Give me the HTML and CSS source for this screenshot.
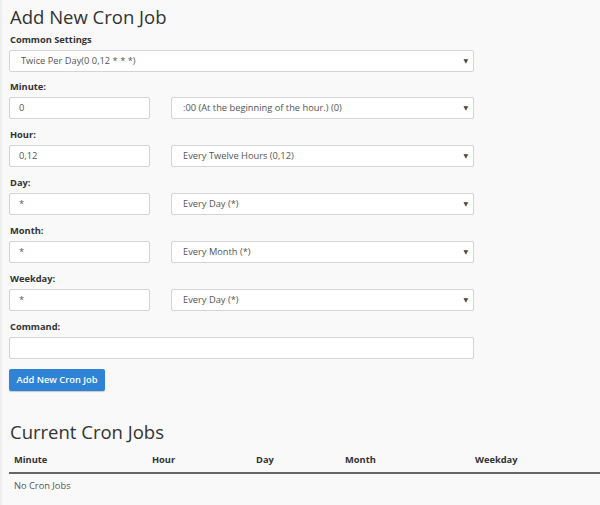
FILE: index.html
```html
<!DOCTYPE html>
<html>
<head>
<meta charset="utf-8">
<link rel="stylesheet" href="styles.css">
</head>
<body>
<div class="page">
  <h1 class="title">Add New Cron Job</h1>
  <form class="form">
    <div class="field first">
      <label class="label">Common Settings</label>
      <div class="select wide"><span class="sel-text">Twice Per Day(0 0,12 * * *)</span><span class="caret">&#9660;</span></div>
    </div>
    <div class="field">
      <label class="label">Minute:</label>
      <div class="pair">
        <div class="input">0</div>
        <div class="select"><span class="sel-text">:00 (At the beginning of the hour.) (0)</span><span class="caret">&#9660;</span></div>
      </div>
    </div>
    <div class="field">
      <label class="label">Hour:</label>
      <div class="pair">
        <div class="input">0,12</div>
        <div class="select"><span class="sel-text">Every Twelve Hours (0,12)</span><span class="caret">&#9660;</span></div>
      </div>
    </div>
    <div class="field">
      <label class="label">Day:</label>
      <div class="pair">
        <div class="input">*</div>
        <div class="select"><span class="sel-text">Every Day (*)</span><span class="caret">&#9660;</span></div>
      </div>
    </div>
    <div class="field">
      <label class="label">Month:</label>
      <div class="pair">
        <div class="input">*</div>
        <div class="select"><span class="sel-text">Every Month (*)</span><span class="caret">&#9660;</span></div>
      </div>
    </div>
    <div class="field">
      <label class="label">Weekday:</label>
      <div class="pair">
        <div class="input">*</div>
        <div class="select"><span class="sel-text">Every Day (*)</span><span class="caret">&#9660;</span></div>
      </div>
    </div>
    <div class="field">
      <label class="label">Command:</label>
      <div class="input wide"></div>
    </div>
    <div class="actions">
      <span class="btn">Add New Cron Job</span>
    </div>
  </form>

  <h2 class="title title2">Current Cron Jobs</h2>
  <div class="table">
    <div class="thead">
      <span class="th c1">Minute</span>
      <span class="th c2">Hour</span>
      <span class="th c3">Day</span>
      <span class="th c4">Month</span>
      <span class="th c5">Weekday</span>
    </div>
    <div class="tbody">No Cron Jobs</div>
  </div>
</div>
</body>
</html>
```

FILE: styles.css
```css
html, body {
  margin: 0;
  padding: 0;
  background: #f9f9f9;
}
body {
  font-family: "Open Sans", "DejaVu Sans", sans-serif;
  color: #333;
  border-left: 2px solid #efefef;
  min-height: 505px;
  box-sizing: border-box;
}
.page {
  padding-left: 7px;
}
.title {
  margin: 0;
  padding: 4px 0 0 1px;
  font-size: 18.5px;
  font-weight: 400;
  line-height: 26px;
  color: #333;
}
.form {
  width: 465px;
  margin: 0;
}
.field {
  display: flex;
  flex-direction: column;
}
.label {
  font-size: 9.3px;
  font-weight: 700;
  line-height: 14px;
  padding-left: 1px;
  margin-top: 3px;
  margin-bottom: 3px;
  color: #333;
}
.pair {
  display: flex;
  gap: 21px;
}
.input, .select {
  box-sizing: border-box;
  height: 22px;
  background: #fff;
  border: 1px solid #d4d4d4;
  border-radius: 2px;
  font-size: 9.3px;
  line-height: 20px;
  color: #555;
  margin-bottom: 6px;
}
.first .select {
  margin-bottom: 5px;
}
.input {
  width: 141px;
  padding-left: 9px;
}
.input.wide {
  width: 465px;
}
.select {
  width: 303px;
  display: flex;
  justify-content: space-between;
  padding: 0 5px 0 11px;
}
.select.wide {
  width: 465px;
}
.caret {
  font-size: 6px;
  color: #444;
}
.actions {
  display: flex;
  margin-top: 4px;
}
.btn {
  display: block;
  box-sizing: border-box;
  width: 96px;
  height: 22px;
  line-height: 22px;
  text-align: center;
  background: #2f83d6;
  color: #fff;
  font-size: 9.3px;
  font-weight: 600;
  border-radius: 2px;
  box-shadow: 0 1px 1px rgba(0,0,0,0.2);
}
.title2 {
  margin-top: 24px;
}
.table {
  margin-top: 8px;
}
.thead {
  display: flex;
  font-size: 9.3px;
  font-weight: 700;
  line-height: 14px;
  padding-bottom: 5px;
  border-bottom: 2px solid #666;
}
.th {
  display: block;
}
.c1 { width: 138px; padding-left: 5px; }
.c2 { width: 104px; }
.c3 { width: 89px; }
.c4 { width: 130px; }
.c5 { width: 100px; }
.tbody {
  font-size: 9.3px;
  color: #555;
  padding: 5px 0 0 5px;
  line-height: 14px;
}
```
